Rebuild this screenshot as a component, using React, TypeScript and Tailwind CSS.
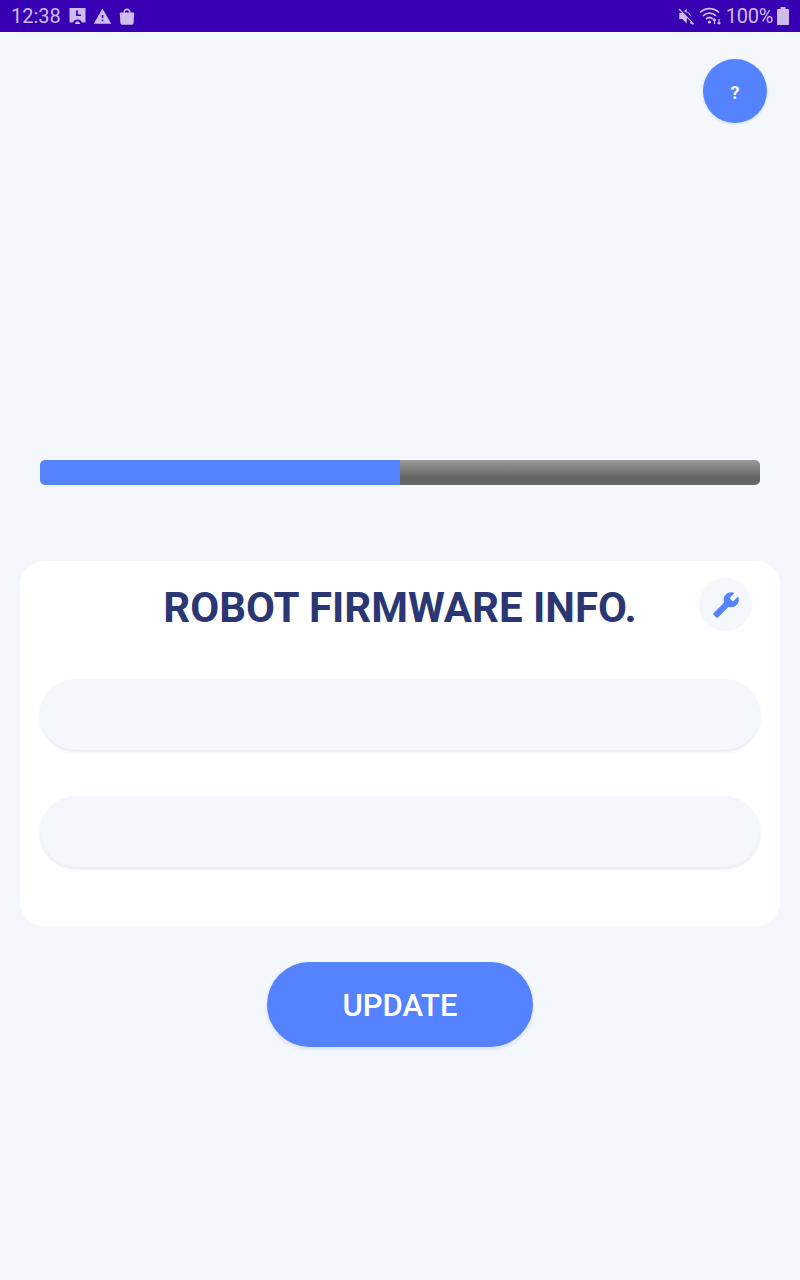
import React from 'react';

const StatusBar: React.FC = () => (
  <div className="h-8 bg-[#3700b3] flex items-center justify-between pl-[11px] pr-[9px] text-[#cdbdec] text-[20px] font-['Roboto',sans-serif]">
    <div className="flex items-center">
      <span className="leading-none">12:38</span>
      <svg className="ml-[7px] w-[19px] h-[18px]" viewBox="0 0 18 18" fill="currentColor">
        <path fillRule="evenodd" d="M1 1h16v14.500h-3.600c-.5-1.800-2.400-3-4.400-3s-3.900 1.200-4.400 3H1zM7.600 3.500v5.600h5V7.500H9.300v-4z" />
        <path d="M6.400 17c.3-1.700 1.300-2.800 2.600-2.800s2.300 1.100 2.600 2.800z" />
      </svg>
      <svg className="ml-[6px] w-[19px] h-[19px]" viewBox="0 0 24 24" fill="currentColor">
        <path d="M1 21h22L12 2 1 21zm12-3h-2v-2h2v2zm0-4h-2v-4h2v4z" />
      </svg>
      <svg className="ml-[6px] w-[18px] h-[18px]" viewBox="1 0 16 17" fill="currentColor">
        <path d="M5.500 5.200C5.700 2.900 7.100 1.500 9 1.500s3.300 1.400 3.500 3.700h2.300c.6 0 1 .4 1 1l-.6 8.800c-.1 1-.9 1.700-1.900 1.700H4.700c-1 0-1.800-.7-1.900-1.700l-.6-8.800c0-.6.4-1 1-1zm1.500 0h4C10.800 3.800 10 3 9 3s-1.800.8-2 2.200z" />
      </svg>
    </div>
    <div className="flex items-center">
      <svg className="w-[18px] h-[18px]" viewBox="0 0 24 24" fill="currentColor">
        <path d="M3.300 2 2 3.300 6.700 8H3v8h4l6 6v-7.700l5.400 5.400c-.5.400-1 .7-1.600.9l1.700 1.700 2.900 1.200 1.300-1.300L3.300 2zM13 2 9.600 5.400 13 8.800z" />
        <path d="M14 6.500c2.700 1.200 4.500 3.400 5.200 6.400l-2.600-2.600c-.5-.9-1.400-1.500-2.600-1.900z" />
      </svg>
      <svg className="ml-[4px] w-[24px] h-[20px]" viewBox="0 0 24 20" fill="none" stroke="currentColor" strokeWidth="1.700">
        <path d="M1 6.500C6.500 1.300 14.500 1.300 20 6.500" />
        <path d="M4 9.800c3.800-3.500 9.200-3.500 13 0" />
        <path d="M7 13c2.100-1.800 4.900-1.800 7 0" />
        <circle cx="10.500" cy="16" r="1.600" fill="currentColor" stroke="none" />
        <path d="M15.500 13v5M14 14.500l1.500-1.500 1.500 1.500M20 18v-5M18.500 16.500l1.500 1.500 1.500-1.500" strokeWidth="1.200" />
      </svg>
      <span className="ml-[3px] leading-none tracking-[-0.3px]">100%</span>
      <svg className="ml-[2px] w-[16px] h-[20px]" viewBox="0 0 16 20" fill="currentColor">
        <path d="M5.500 1h5v2H13c.6 0 1 .4 1 1v14c0 .6-.4 1-1 1H3c-.6 0-1-.4-1-1V4c0-.6.4-1 1-1h2.500z" />
      </svg>
    </div>
  </div>
);

const Field: React.FC = () => (
  <div className="h-[71px] rounded-full bg-[#f4f7fc] shadow-[0_2px_3px_rgba(60,70,110,0.12)]" />
);

export default function App() {
  return (
    <div className="w-[800px] h-[1280px] bg-[#f4f8fd] font-['Roboto',sans-serif] overflow-hidden">
      <StatusBar />

      <div className="flex justify-end pt-[27px] pr-[33px]">
        <button className="w-16 h-16 pt-[2px] rounded-full bg-[#5582ff] text-white text-[18px] font-bold shadow-[0_1px_3px_rgba(60,70,110,0.2)]">
          ?
        </button>
      </div>

      <div className="mx-10 mt-[337px] h-[25px] rounded-[5px] overflow-hidden flex">
        <div className="w-1/2 bg-[#5582ff]" />
        <div className="w-1/2 bg-gradient-to-b from-[#9c9c9a] via-[#5f625f] via-75% to-[#6a6c6a]" />
      </div>

      <div className="mx-5 mt-[76px] h-[365px] rounded-[24px] bg-white px-5 pt-[17px]">
        <div className="relative h-[53px] flex items-center justify-center">
          <h1 className="pt-[6px] text-[42px] leading-none font-bold text-[#2b3773]">ROBOT FIRMWARE INFO.</h1>
          <div className="absolute right-[8px] top-0 w-[53px] h-[53px] rounded-full bg-[#f4f7fc] flex items-center justify-center">
            <svg className="w-[28px] h-[28px] -scale-x-100" viewBox="0 0 24 24" fill="#5582ff">
              <path d="M22.700 19l-9.100-9.100c.9-2.300.4-5-1.500-6.900-2-2-5-2.400-7.400-1.300L9 6 6 9 1.600 4.700C.4 7.100.9 10.100 2.900 12.100c1.900 1.900 4.600 2.400 6.900 1.500l9.100 9.100c.4.4 1 .4 1.400 0l2.300-2.300c.5-.4.5-1.100.1-1.400z" />
            </svg>
          </div>
        </div>
        <div className="mt-[48px] flex flex-col gap-[46px]">
          <Field />
          <Field />
        </div>
      </div>

      <div className="flex justify-center mt-9">
        <button className="w-[266px] h-[85px] pt-[3px] rounded-full bg-[#5582ff] text-white text-[31px] font-medium shadow-[0_2px_4px_rgba(60,70,110,0.14)]">
          UPDATE
        </button>
      </div>
    </div>
  );
}
